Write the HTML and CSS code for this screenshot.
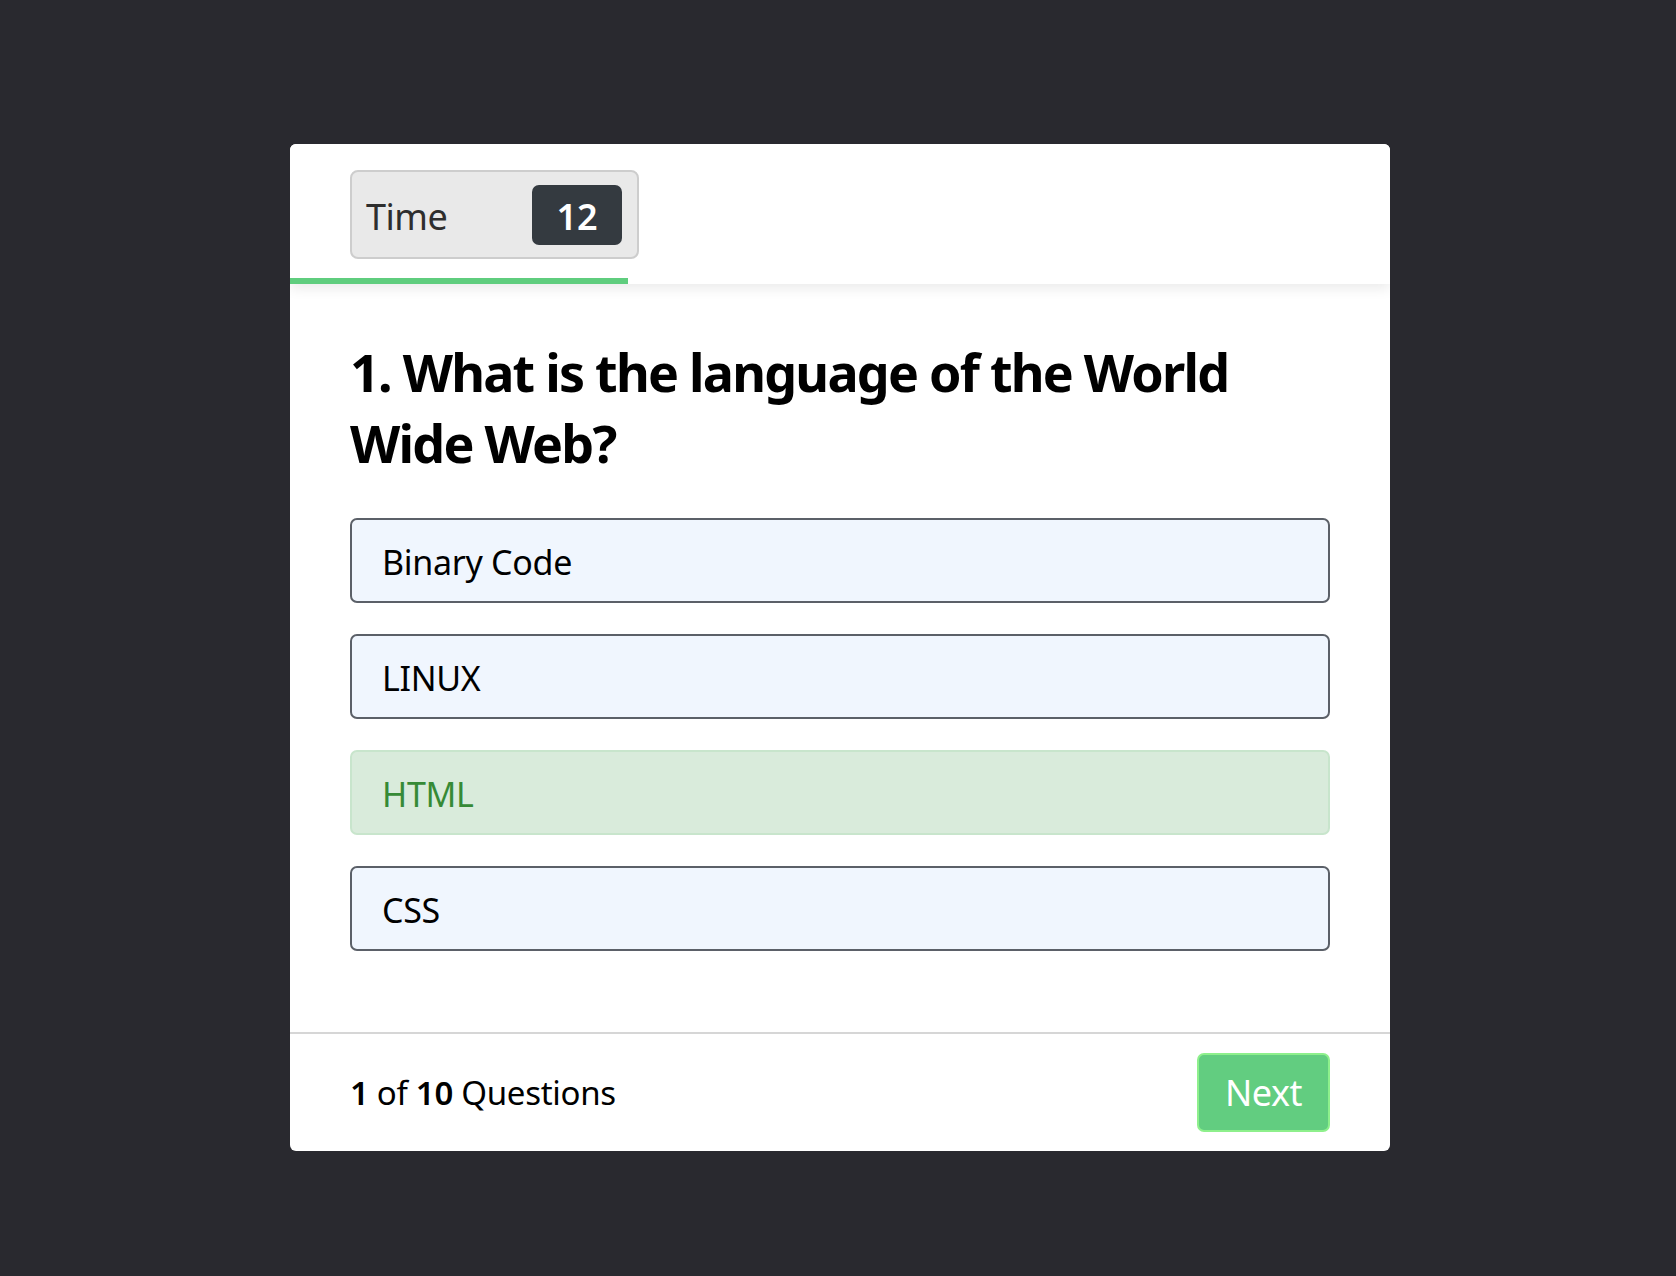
FILE: index.html
```html
<!DOCTYPE html>
<html lang="en">
<head>
<meta charset="utf-8">
<title>Quiz</title>
<link rel="stylesheet" href="styles.css">
</head>
<body>
<div class="page">
  <div class="card">
    <header class="card-header">
      <div class="timer">
        <span class="timer-label">Time</span>
        <span class="timer-badge">12</span>
      </div>
      <div class="progress"></div>
    </header>
    <section class="card-body">
      <h1 class="question">1. What is the language of the World Wide Web?</h1>
      <div class="options">
        <div class="option">Binary Code</div>
        <div class="option">LINUX</div>
        <div class="option option-correct">HTML</div>
        <div class="option">CSS</div>
      </div>
    </section>
    <footer class="card-footer">
      <span class="count"><b>1</b> of <b>10</b> Questions</span>
      <button class="next">Next</button>
    </footer>
  </div>
</div>
</body>
</html>
```

FILE: styles.css
```css
* { box-sizing: border-box; }
html, body { margin: 0; padding: 0; }
body {
  background: #29292f;
  font-family: "Noto Sans", "Open Sans", sans-serif;
  color: #000;
  min-height: 1276px;
}
.page {
  padding: 144px 0 0 290px;
}
.card {
  width: 1100px;
  background: #fff;
  border-radius: 6px;
  overflow: hidden;
}
.card-header {
  position: relative;
  z-index: 1;
  padding: 26px 60px 0;
  height: 140px;
  display: flex;
  flex-direction: column;
  box-shadow: 0 5px 12px rgba(0,0,0,0.08);
  background: #fff;
}
.timer {
  width: 289px;
  height: 89px;
  border: 2px solid #cdcdcd;
  background: #e9e9e9;
  border-radius: 8px;
  display: flex;
  align-items: center;
  justify-content: space-between;
  padding: 0 15px 0 14px;
}
.timer-label {
  font-size: 36px;
  color: #2e2e2e;
  letter-spacing: -0.5px;
  padding-top: 3px;
}
.timer-badge {
  width: 90px;
  height: 60px;
  background: #343a40;
  border-radius: 7px;
  color: #fff;
  font-size: 36px;
  font-weight: 600;
  display: flex;
  align-items: center;
  justify-content: center;
  padding-top: 4px;
}
.progress {
  margin: 19px 0 0 -60px;
  width: 338px;
  height: 6px;
  background: #5fcd7e;
}
.card-body {
  padding: 52px 60px 81px;
}
.question {
  margin: 0 0 40px;
  font-size: 52px;
  line-height: 71px;
  font-weight: 700;
  letter-spacing: -1.75px;
}
.options {
  display: flex;
  flex-direction: column;
  gap: 31px;
}
.option {
  height: 85px;
  border: 2px solid #5b6068;
  background: #f0f6fe;
  border-radius: 7px;
  padding: 2px 30px 0;
  display: flex;
  align-items: center;
  font-size: 34px;
  letter-spacing: -0.3px;
}
.option-correct {
  background: #d9ebdb;
  border-color: #c8e5cc;
  color: #368a36;
}
.card-footer {
  border-top: 2px solid #d6d6d6;
  height: 119px;
  padding: 0 60px;
  display: flex;
  align-items: center;
  justify-content: space-between;
}
.count {
  font-size: 33px;
  letter-spacing: -0.3px;
}
.count b { font-weight: 600; }
.next {
  width: 133px;
  height: 79px;
  background: #62cd80;
  border: 2px solid #8ef08c;
  border-radius: 7px;
  color: #fff;
  font-family: "Noto Sans", "Open Sans", sans-serif;
  font-size: 36px;
  padding: 0;
  letter-spacing: -0.5px;
}
```
